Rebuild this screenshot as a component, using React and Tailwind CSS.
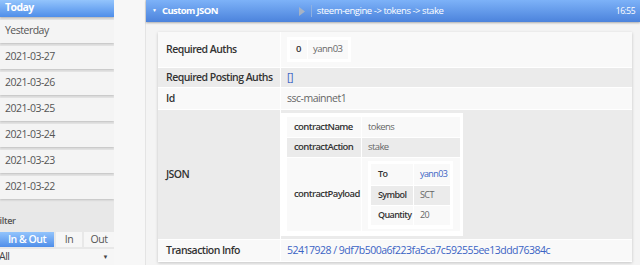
const days = ["Yesterday", "2021-03-27", "2021-03-26", "2021-03-25", "2021-03-24", "2021-03-23", "2021-03-22"];

function Sidebar() {
  return (
    <div className="w-[114px] shrink-0 bg-[#e8e8e8] flex flex-col">
      <div className="h-[22px] flex items-center px-[5px] text-white font-bold text-[10.5px] tracking-[-0.6px] bg-gradient-to-b from-[#93c4fc] to-[#4f8ee9] shadow-[0_1px_2px_rgba(0,0,0,0.25)]">
        Today
      </div>
      <div className="flex flex-col gap-[3px] mt-[3px]">
        {days.map((d) => (
          <div
            key={d}
            className="h-[23px] flex items-center px-[5px] text-[10.5px] tracking-[-0.5px] text-[#555] bg-[#f4f4f4] shadow-[0_1px_2px_rgba(0,0,0,0.18)]"
          >
            {d}
          </div>
        ))}
      </div>
      <div className="mt-[17px] ml-[-5px] text-[9px] tracking-[-0.3px] font-semibold text-[#555] leading-[10px] whitespace-nowrap">Filter</div>
      <div className="mt-[6px] flex gap-[2px] h-[19px] text-[10.5px] tracking-[-0.5px] whitespace-nowrap">
        <div className="w-[54px] flex items-center justify-center text-white font-semibold bg-gradient-to-b from-[#93c4fc] to-[#4f8ee9]">
          In &amp; Out
        </div>
        <div className="w-[26px] flex items-center justify-center text-[#555] bg-[#f6f6f6]">In</div>
        <div className="w-[30px] flex items-center justify-center text-[#555] bg-[#f6f6f6]">Out</div>
      </div>
      <div className="mt-[2px] h-[18px] flex items-center justify-between bg-[#f6f6f6] pr-[6px] text-[10.5px] tracking-[-0.5px] text-[#444]">
        <span className="ml-[-1px]">All</span>
        <span className="text-[6px]">▼</span>
      </div>
    </div>
  );
}

function Row({ label, gray, children, h, pad = "pl-[6px]" }) {
  return (
    <div className={`flex border-b border-white ${gray ? "bg-[#ebebeb]" : "bg-[#f9f9f9]"}`} style={{ height: h }}>
      <div className="w-[123px] shrink-0 border-r border-white pl-[8px] flex items-center text-[10.5px] tracking-[-0.55px] font-semibold text-[#333] whitespace-nowrap">
        {label}
      </div>
      <div className={`flex-1 flex items-center ${pad} text-[10.5px] tracking-[-0.5px] text-[#666] whitespace-nowrap`}>{children}</div>
    </div>
  );
}

function MiniRow({ label, gray, children, h, labelW, size, pad = "pl-[6px]" }) {
  return (
    <div className={`flex border-b border-white ${gray ? "bg-[#ebebeb]" : "bg-[#f9f9f9]"}`} style={{ height: h }}>
      <div className={`shrink-0 border-r border-white pl-[7px] flex items-center font-semibold text-[#333] whitespace-nowrap ${size}`} style={{ width: labelW }}>
        {label}
      </div>
      <div className={`flex-1 flex items-center ${pad} text-[#666] whitespace-nowrap ${size}`}>{children}</div>
    </div>
  );
}

export default function App() {
  return (
    <div className="w-[640px] h-[265px] overflow-hidden flex bg-[#f3f3f3] font-['Open_Sans',sans-serif]">
      <Sidebar />
      <div className="w-[31px] shrink-0 bg-[#f7f7f7]" />
      <div className="flex-1 flex flex-col bg-[#f4f4f4] border-l border-[#e4e4e4]">
        <div className="h-[22px] shrink-0 flex items-center text-white bg-gradient-to-b from-[#7db2f8] to-[#4c83dc] shadow-[0_1px_2px_rgba(0,0,0,0.3)]">
          <span className="ml-[6px] text-[5px]">▼</span>
          <span className="ml-[5px] font-bold text-[9.5px] tracking-[-0.6px]">Custom JSON</span>
          <svg className="ml-[81px]" width="6" height="9" viewBox="0 0 6 9">
            <path d="M0 0 L6 4.5 L0 9 Z" fill="#a6b2c4" />
          </svg>
          <span className="ml-[6px] h-[12px] w-px bg-[#8fb0e0]" />
          <span className="ml-[5px] text-[9.5px] tracking-[-0.45px]">steem-engine -&gt; tokens -&gt; stake</span>
          <span className="ml-auto mr-[5px] text-[8.5px] tracking-[-0.5px]">16:55</span>
        </div>
        <div className="flex-1 pl-[12px] pr-[8px] pt-[10px]">
          <div className="bg-[#fbfbfb] shadow-[0_1px_3px_rgba(0,0,0,0.2)] flex flex-col">
            <Row label="Required Auths" h={36}>
              <div className="flex h-[25px] bg-[#f9f9f9] border-[3px] border-white text-[9.5px]">
                <div className="w-[18px] flex items-center justify-center border-r border-white text-[#333] font-semibold">0</div>
                <div className="px-[5px] flex items-center text-[#666] tracking-[-0.5px]">yann03</div>
              </div>
            </Row>
            <Row label="Required Posting Auths" gray h={20}>
              <span className="text-[#3b63c4]">[]</span>
            </Row>
            <Row label="Id" h={22}>
              ssc-mainnet1
            </Row>
            <Row label="JSON" gray h={130} pad="pl-0">
              <div className="w-[182px] bg-white pl-[6px] pr-[3px] py-[4px]">
                <MiniRow label="contractName" h={21} labelW={75} size="text-[9.5px] tracking-[-0.6px]">tokens</MiniRow>
                <MiniRow label="contractAction" gray h={20} labelW={75} size="text-[9.5px] tracking-[-0.6px]">stake</MiniRow>
                <MiniRow label="contractPayload" h={74} labelW={75} size="text-[9.5px] tracking-[-0.6px]">
                  <div className="w-[85px] bg-white p-[3px]">
                    <MiniRow label="To" h={22} labelW={43} size="text-[9px] tracking-[-0.6px]">
                      <span className="text-[#3b63c4]">yann03</span>
                    </MiniRow>
                    <MiniRow label="Symbol" gray h={20} labelW={43} size="text-[9px] tracking-[-0.6px]">SCT</MiniRow>
                    <MiniRow label="Quantity" h={20} labelW={43} size="text-[9px] tracking-[-0.6px]">20</MiniRow>
                  </div>
                </MiniRow>
              </div>
            </Row>
            <Row label="Transaction Info" h={22}>
              <span className="text-[#3b63c4]">52417928 / 9df7b500a6f223fa5ca7c592555ee13ddd76384c</span>
            </Row>
          </div>
        </div>
      </div>
    </div>
  );
}
